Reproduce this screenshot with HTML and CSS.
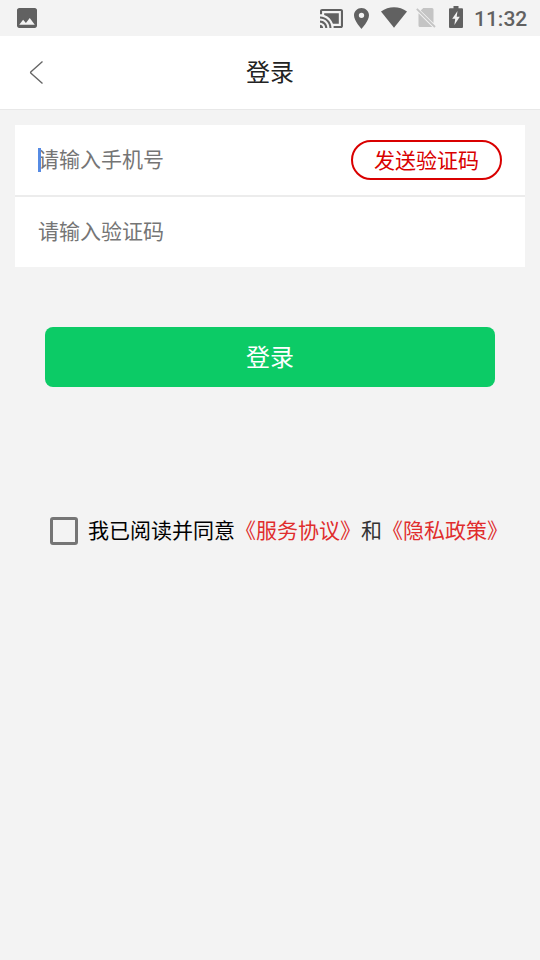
FILE: index.html
```html
<!DOCTYPE html>
<html lang="zh-CN">
<head>
<meta charset="utf-8">
<title>登录</title>
<link rel="stylesheet" href="styles.css">
</head>
<body>
<header class="status">
  <svg class="picture" width="20" height="20" viewBox="3 3 18 18"><path d="M21 19V5c0-1.100-.9-2-2-2H5c-1.100 0-2 .9-2 2v14c0 1.100.9 2 2 2h14c1.100 0 2-.9 2-2zM8.500 13.500l2.500 3 3.500-4.500 4.500 6H5l3.500-4.500z"/></svg>
  <svg class="cast" width="23" height="19" viewBox="1 3 22 18" preserveAspectRatio="none"><path d="M1 18v3h3c0-1.660-1.340-3-3-3zm0-4v2c2.760 0 5 2.240 5 5h2c0-3.870-3.130-7-7-7zm18-7H5v1.630c3.960 1.280 7.090 4.410 8.370 8.370H19V7zM1 10v2c4.970 0 9 4.030 9 9h2c0-6.080-4.930-11-11-11zm20-7H3c-1.100 0-2 .9-2 2v3h2V5h18v14h-7v2h7c1.100 0 2-.9 2-2V5c0-1.100-.9-2-2-2z"/></svg>
  <svg class="pin" width="15" height="21" viewBox="5 2 14 20" preserveAspectRatio="none"><path d="M12 2C8.130 2 5 5.130 5 9c0 5.250 7 13 7 13s7-7.750 7-13c0-3.870-3.130-7-7-7zm0 9.500a2.500 2.500 0 1 1 0-5 2.500 2.500 0 0 1 0 5z"/></svg>
  <svg class="wifi" width="26" height="21" viewBox="0 0 26 21"><path d="M0 4.500C7.500-1.300 18.500-1.300 26 4.500L13 20.700z"/></svg>
  <svg class="nosim" width="20" height="21" viewBox="0 0 20 21"><path d="M7.300 1H16q1.500 0 1.500 1.500V16L4.700 3.600zM2.500 6.200 16.300 20H4q-1.500 0-1.500-1.500z"/><path class="slash" d="M.8 1.800 19 20"/></svg>
  <svg class="battery" width="14" height="22" viewBox="0 0 14 22"><path fill-rule="evenodd" d="M4.500 0h5v2.200H13q1 0 1 1V21q0 1-1 1H1q-1 0-1-1V3.200q0-1 1-1h3.500zM8.500 5 3.200 12.800h3L5.400 19l5.400-8.300H7.700z"/></svg>
  <span class="clock">11:32</span>
</header>
<nav class="navbar">
  <svg class="back" width="15" height="25" viewBox="0 0 15 25"><path d="M13.500 1.500 2 11.800q-.8.700 0 1.400L13.500 23.500"/></svg>
  <h1 class="title">登录</h1>
</nav>
<main>
  <section class="form">
    <div class="field"><div class="entry"><i class="caret"></i>请输入手机号</div><button class="send">发送验证码</button></div>
    <div class="field"><div class="entry">请输入验证码</div></div>
  </section>
  <button class="login">登录</button>
  <div class="agree"><i class="checkbox"></i><span class="read">我已阅读并同意</span><a>《服务协议》</a><span>和</span><a>《隐私政策》</a></div>
</main>
</body>
</html>
```
FILE: styles.css
```css
* { box-sizing: border-box; }
body {
  margin: 0;
  min-height: 960px;
  background: #f3f3f3;
  font-family: Roboto, "Noto Sans CJK SC", sans-serif;
  font-size: 21px;
  color: #333;
}
button { font: inherit; padding: 0; }
.status {
  display: flex;
  align-items: flex-start;
  height: 36px;
  padding-left: 17px;
  fill: #616161;
}
.status svg { flex: none; }
.picture { margin-top: 8px; }
.cast { margin: 9px 0 0 283px; }
.pin { margin: 8px 0 0 11px; }
.wifi { margin: 7px 0 0 12px; }
.nosim { margin: 7px 0 0 9px; fill: #c4c4c4; }
.slash { stroke: #c4c4c4; stroke-width: 1.8; }
.battery { margin: 6px 0 0 13px; }
.clock {
  margin-left: 11px;
  font-weight: 500;
  line-height: 38px;
  color: #616161;
}
.navbar {
  display: grid;
  grid-template-columns: 60px 1fr 60px;
  align-items: center;
  height: 74px;
  background: #fff;
  border-bottom: 1px solid #e8e8e8;
}
.back {
  margin-left: 29px;
  fill: none;
  stroke: #666;
  stroke-width: 1.4;
}
.title {
  margin: 0;
  text-align: center;
  font-size: 24px;
  font-weight: 400;
  line-height: 36px;
  color: #222;
}
.form { margin: 15px 15px 0; }
.field {
  display: flex;
  align-items: center;
  justify-content: space-between;
  height: 70px;
  padding: 0 23px;
  background: #fff;
}
.field + .field { height: 72px; border-top: 2px solid #ececec; }
.entry { position: relative; color: #757575; line-height: 32px; }
.caret {
  position: absolute;
  left: 0;
  top: 4px;
  width: 3px;
  height: 24px;
  background: #568be4;
}
.send {
  width: 151px;
  height: 40px;
  padding-bottom: 2px;
  border: 2px solid #d90000;
  border-radius: 20px;
  background: #fff;
  color: #d90000;
}
.login {
  display: block;
  width: 450px;
  height: 60px;
  margin: 60px auto 0;
  padding-bottom: 4px;
  border: 0;
  border-radius: 8px;
  background: #0ccb66;
  color: #fff;
  font-size: 24px;
}
.agree {
  display: flex;
  align-items: center;
  margin: 128px 0 0 50px;
  line-height: 32px;
  white-space: nowrap;
}
.checkbox {
  width: 28px;
  height: 28px;
  margin-right: 10px;
  border: 3px solid #757575;
  border-radius: 3px;
}
.read { color: #000; }
.agree a { color: #e02d2d; }
```
